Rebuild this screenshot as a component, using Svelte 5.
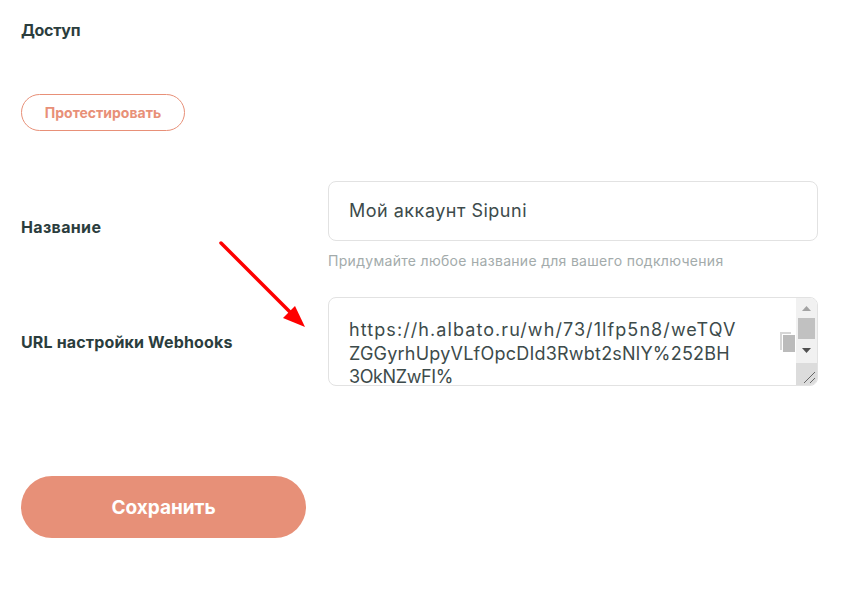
<script>
	let name = 'Мой аккаунт Sipuni';
	const url = ['https://h.albato.ru/wh/73/1lfp5n8/weTQV', 'ZGGyrhUpyVLfOpcDId3Rwbt2sNlY%252BH', '3OkNZwFI%'];
</script>

<div class="page">
	<div class="title">Доступ</div>
	<button class="test">Протестировать</button>

	<div class="row name-row">
		<div class="label">Название</div>
		<div class="field">
			<div class="input">{name}</div>
		</div>
	</div>
	<div class="hint">Придумайте любое название для вашего подключения</div>

	<div class="row url-row">
		<div class="label">URL настройки Webhooks</div>
		<div class="field">
			<div class="area">
				<div class="area-text">
					{#each url as line}
						<div>{line}</div>
					{/each}
				</div>
				<svg class="copy" width="16" height="21" viewBox="0 0 16 21">
					<path d="M0 0h11v2H2v16H0z" fill="#d6d6d6" />
					<rect x="3" y="3" width="12" height="17" fill="#bbb" />
				</svg>
				<div class="scroll">
					<div class="track">
						<svg width="17" height="17" viewBox="0 0 17 17"><path d="M4 11h9L8.500 6z" fill="#a3a3a3" /></svg>
						<div class="thumb"></div>
						<svg class="down" width="17" height="17" viewBox="0 0 17 17"><path d="M4 6h9l-4.500 5z" fill="#505050" /></svg>
					</div>
					<div class="grip">
						<svg width="21" height="22" viewBox="0 0 21 22">
							<path d="M8 20 19 9M14 20l5-5" stroke="#666" stroke-width="1" fill="none" />
						</svg>
					</div>
				</div>
			</div>
		</div>
	</div>

	<button class="save">Сохранить</button>

	<svg class="arrow" width="100" height="100" viewBox="0 0 100 100">
		<path d="M5 6 74 75" stroke="#fe0000" stroke-width="3.500" stroke-linecap="round" fill="none" />
		<path d="M89 90 67 81 79 69z" fill="#fe0000" />
	</svg>
</div>

<style>
	:global(body) {
		margin: 0;
		background: #fff;
	}
	.page {
		position: relative;
		width: 841px;
		height: 595px;
		padding: 21px 0 0 21px;
		box-sizing: border-box;
		font-family: Inter, Lato, sans-serif;
		color: #2f3f3f;
		overflow: hidden;
	}
	.title,
	.label {
		font-size: 16px;
		font-weight: 700;
		line-height: 19px;
		color: #2b3d3d;
	}
	.title {
		letter-spacing: -0.3px;
	}
	.test {
		display: block;
		width: 164px;
		height: 37px;
		margin-top: 54px;
		padding: 0;
		border: 1px solid #e89078;
		border-radius: 19px;
		background: #fff;
		color: #e89078;
		font: 700 14px Inter, sans-serif;
	}
	.row {
		display: flex;
		align-items: center;
	}
	.label {
		width: 307px;
		flex: none;
		letter-spacing: 0.15px;
	}
	.field {
		width: 490px;
	}
	.name-row {
		margin-top: 50px;
	}
	.name-row .label {
		padding-top: 32px;
		letter-spacing: 0.35px;
	}
	.input {
		height: 60px;
		box-sizing: border-box;
		border: 1px solid #e2e2e2;
		border-radius: 8px;
		padding: 0 20px;
		font-size: 18px;
		letter-spacing: 0.5px;
		line-height: 58px;
		color: #3d4b4b;
	}
	.hint {
		margin: 11px 0 0 307px;
		font-size: 14px;
		letter-spacing: 0.3px;
		line-height: 18px;
		color: #a3abab;
	}
	.url-row {
		margin-top: 27px;
	}
	.url-row .label {
		padding-top: 2px;
	}
	.area {
		display: flex;
		height: 89px;
		box-sizing: border-box;
		border: 1px solid #e2e2e2;
		border-radius: 8px;
		overflow: hidden;
		position: relative;
	}
	.area-text {
		flex: 1;
		padding: 20px 0 0 20px;
		font-size: 18px;
		line-height: 23.500px;
		color: #3d4b4b;
		white-space: nowrap;
	}
	.area-text div:nth-child(1) {
		letter-spacing: 1.08px;
	}
	.area-text div:nth-child(2) {
		letter-spacing: 0.22px;
	}
	.area-text div:nth-child(3) {
		letter-spacing: -0.4px;
	}
	.copy {
		position: absolute;
		right: 21px;
		top: 34px;
	}
	.scroll {
		width: 21px;
		flex: none;
		display: flex;
		flex-direction: column;
	}
	.track {
		flex: 1;
		background: #f1f1f1;
		display: flex;
		flex-direction: column;
		align-items: center;
		padding-top: 2px;
	}
	.thumb {
		width: 17px;
		height: 21px;
		margin-top: 1px;
		background: #c1c1c1;
	}
	.down {
		margin-top: 3px;
	}
	.grip {
		height: 22px;
		background: #dcdcdc;
	}
	.grip svg {
		display: block;
	}
	.save {
		display: block;
		width: 285px;
		height: 62px;
		margin-top: 90px;
		padding: 0;
		border: none;
		border-radius: 31px;
		background: #e79078;
		color: #fff;
		font: 700 19px Inter, sans-serif;
	}
	.arrow {
		position: absolute;
		left: 216px;
		top: 237px;
	}
</style>
